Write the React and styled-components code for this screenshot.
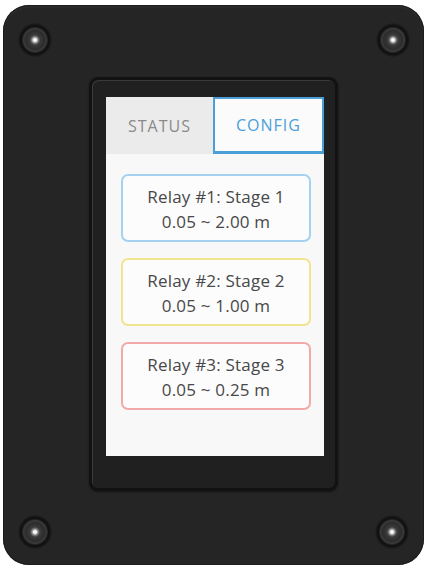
import React from 'react'
import styled, { createGlobalStyle } from 'styled-components'

const Global = createGlobalStyle`
  html, body {
    margin: 0;
    padding: 0;
    background: #ffffff;
  }
  body {
    font-family: "Open Sans", "DejaVu Sans", sans-serif;
  }
`

const Page = styled.div`
  width: 429px;
  height: 572px;
  box-sizing: border-box;
  padding: 5px 5px 7px 3px;
  display: flex;
`

const Plate = styled.div`
  position: relative;
  flex: 1;
  border-radius: 26px;
  background: #252525;
  box-shadow: inset 0 0 0 1px #1c1c1c, inset 0 2px 3px rgba(255, 255, 255, 0.06);
  display: flex;
  align-items: center;
  justify-content: center;
`

const Screw = styled.div`
  position: absolute;
  width: 34px;
  height: 34px;
  margin: -17px 0 0 -17px;
  border-radius: 50%;
  left: ${p => p.x}px;
  top: ${p => p.y}px;
  background: radial-gradient(circle at 50% 50%, #f6f6f6 0 1.5px, #8a8a8a 3px, #3c3c3c 5px, #2c2c2c 9px, #393939 11.5px, #101010 13.5px, #141414 15px, #222 17px);
`

const Bezel = styled.div`
  width: 249px;
  height: 414px;
  box-sizing: border-box;
  margin-top: -2px;
  border: 3px solid #121212;
  border-radius: 9px;
  background: #202020;
  box-shadow: inset 1px 1px 0 #3a3a3a, 0 1px 2px rgba(0, 0, 0, 0.5);
  padding: 17px 11px 32px 14px;
  display: flex;
`

const Screen = styled.div`
  flex: 1;
  background: #f8f8f8;
  display: flex;
  flex-direction: column;
`

const Tabs = styled.div`
  display: flex;
  height: 57px;
`

const Tab = styled.div`
  flex: 1;
  box-sizing: border-box;
  display: flex;
  align-items: center;
  justify-content: center;
  font-size: 16px;
  letter-spacing: 1px;
  text-transform: uppercase;
  color: ${p => (p.active ? '#4a9fd9' : '#8a8a8a')};
  background: ${p => (p.active ? '#fbfbfb' : '#ebebeb')};
  border: ${p => (p.active ? '2px solid #4a9fd9' : 'none')};
  border-bottom-width: ${p => (p.active ? '3px' : '0')};
`

const List = styled.div`
  display: flex;
  flex-direction: column;
  gap: 16px;
  padding: 20px 13px 0 15px;
`

const Card = styled.div`
  height: 68px;
  box-sizing: border-box;
  padding-top: 2px;
  border: 2px solid ${p => p.color};
  border-radius: 7px;
  background: #fcfcfc;
  display: flex;
  flex-direction: column;
  align-items: center;
  justify-content: center;
  color: #484848;
  font-size: 17px;
  line-height: 25px;
  letter-spacing: 0.2px;
`

const relays = [
  { name: 'Relay #1: Stage 1', range: '0.05 ~ 2.00 m', color: '#a3d2f1' },
  { name: 'Relay #2: Stage 2', range: '0.05 ~ 1.00 m', color: '#f2e38f' },
  { name: 'Relay #3: Stage 3', range: '0.05 ~ 0.25 m', color: '#f1a9a9' },
]

export default function App() {
  return (
    <Page>
      <Global />
      <Plate>
        <Screw x={32} y={35} />
        <Screw x={390} y={35} />
        <Screw x={32} y={527} />
        <Screw x={389} y={527} />
        <Bezel>
          <Screen>
            <Tabs>
              <Tab>Status</Tab>
              <Tab active>Config</Tab>
            </Tabs>
            <List>
              {relays.map(r => (
                <Card key={r.name} color={r.color}>
                  <div>{r.name}</div>
                  <div>{r.range}</div>
                </Card>
              ))}
            </List>
          </Screen>
        </Bezel>
      </Plate>
    </Page>
  )
}
